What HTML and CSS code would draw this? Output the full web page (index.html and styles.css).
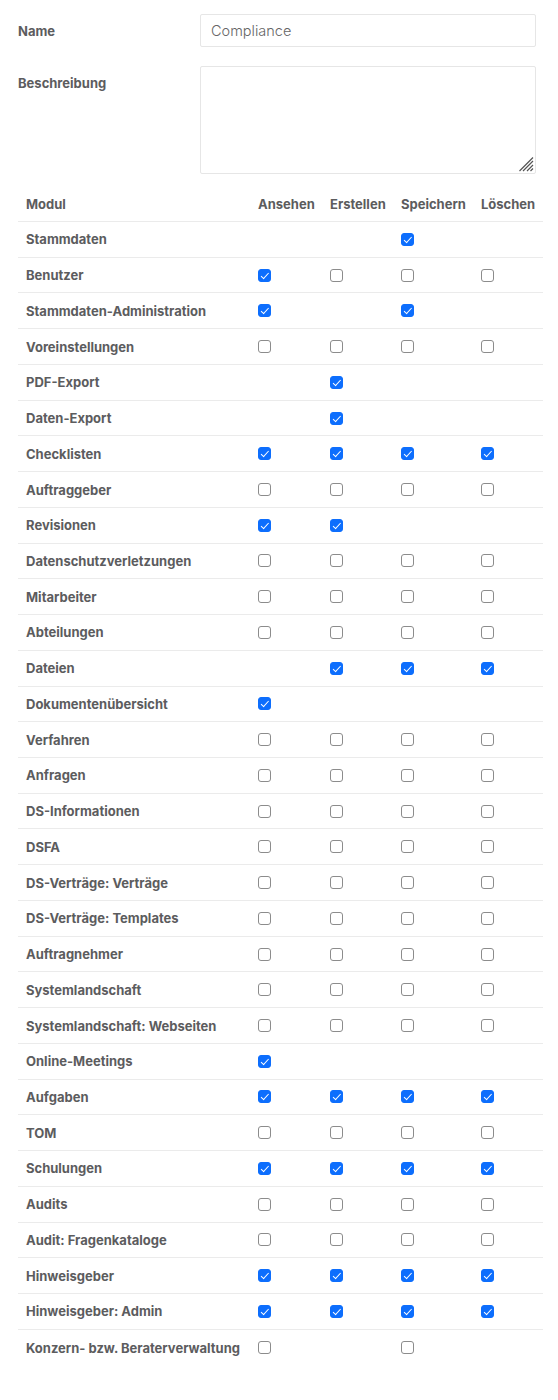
FILE: index.html
```html
<!DOCTYPE html>
<html lang="de">
<head>
<meta charset="utf-8">
<title>Rolle bearbeiten</title>
<link rel="stylesheet" href="styles.css">
</head>
<body>
<div class="page">
  <div class="form-row">
    <label class="form-label" for="name">Name</label>
    <input class="form-input" id="name" type="text" value="Compliance">
  </div>
  <div class="form-row top">
    <label class="form-label" for="desc">Beschreibung</label>
    <div class="textarea" id="desc">
      <svg class="grip" viewBox="0 0 16 16" width="16" height="16"><path d="M15 5L5 15M15 9L9 15M15 12.5L12.5 15M15 1.5L1.5 15" stroke="#555" stroke-width="1.2" fill="none"/></svg>
    </div>
  </div>

  <div class="perm-table">
    <div class="prow head"><div>Modul</div><div>Ansehen</div><div>Erstellen</div><div>Speichern</div><div>Löschen</div></div>
    <div class="prow"><div>Stammdaten</div><div></div><div></div><div><span class="cb on"></span></div><div></div></div>
    <div class="prow"><div>Benutzer</div><div><span class="cb on"></span></div><div><span class="cb"></span></div><div><span class="cb"></span></div><div><span class="cb"></span></div></div>
    <div class="prow"><div>Stammdaten-Administration</div><div><span class="cb on"></span></div><div></div><div><span class="cb on"></span></div><div></div></div>
    <div class="prow"><div>Voreinstellungen</div><div><span class="cb"></span></div><div><span class="cb"></span></div><div><span class="cb"></span></div><div><span class="cb"></span></div></div>
    <div class="prow"><div>PDF-Export</div><div></div><div><span class="cb on"></span></div><div></div><div></div></div>
    <div class="prow"><div>Daten-Export</div><div></div><div><span class="cb on"></span></div><div></div><div></div></div>
    <div class="prow"><div>Checklisten</div><div><span class="cb on"></span></div><div><span class="cb on"></span></div><div><span class="cb on"></span></div><div><span class="cb on"></span></div></div>
    <div class="prow"><div>Auftraggeber</div><div><span class="cb"></span></div><div><span class="cb"></span></div><div><span class="cb"></span></div><div><span class="cb"></span></div></div>
    <div class="prow"><div>Revisionen</div><div><span class="cb on"></span></div><div><span class="cb on"></span></div><div></div><div></div></div>
    <div class="prow"><div>Datenschutzverletzungen</div><div><span class="cb"></span></div><div><span class="cb"></span></div><div><span class="cb"></span></div><div><span class="cb"></span></div></div>
    <div class="prow"><div>Mitarbeiter</div><div><span class="cb"></span></div><div><span class="cb"></span></div><div><span class="cb"></span></div><div><span class="cb"></span></div></div>
    <div class="prow"><div>Abteilungen</div><div><span class="cb"></span></div><div><span class="cb"></span></div><div><span class="cb"></span></div><div><span class="cb"></span></div></div>
    <div class="prow"><div>Dateien</div><div></div><div><span class="cb on"></span></div><div><span class="cb on"></span></div><div><span class="cb on"></span></div></div>
    <div class="prow"><div>Dokumentenübersicht</div><div><span class="cb on"></span></div><div></div><div></div><div></div></div>
    <div class="prow"><div>Verfahren</div><div><span class="cb"></span></div><div><span class="cb"></span></div><div><span class="cb"></span></div><div><span class="cb"></span></div></div>
    <div class="prow"><div>Anfragen</div><div><span class="cb"></span></div><div><span class="cb"></span></div><div><span class="cb"></span></div><div><span class="cb"></span></div></div>
    <div class="prow"><div>DS-Informationen</div><div><span class="cb"></span></div><div><span class="cb"></span></div><div><span class="cb"></span></div><div><span class="cb"></span></div></div>
    <div class="prow"><div>DSFA</div><div><span class="cb"></span></div><div><span class="cb"></span></div><div><span class="cb"></span></div><div><span class="cb"></span></div></div>
    <div class="prow"><div>DS-Verträge: Verträge</div><div><span class="cb"></span></div><div><span class="cb"></span></div><div><span class="cb"></span></div><div><span class="cb"></span></div></div>
    <div class="prow"><div>DS-Verträge: Templates</div><div><span class="cb"></span></div><div><span class="cb"></span></div><div><span class="cb"></span></div><div><span class="cb"></span></div></div>
    <div class="prow"><div>Auftragnehmer</div><div><span class="cb"></span></div><div><span class="cb"></span></div><div><span class="cb"></span></div><div><span class="cb"></span></div></div>
    <div class="prow"><div>Systemlandschaft</div><div><span class="cb"></span></div><div><span class="cb"></span></div><div><span class="cb"></span></div><div><span class="cb"></span></div></div>
    <div class="prow"><div>Systemlandschaft: Webseiten</div><div><span class="cb"></span></div><div><span class="cb"></span></div><div><span class="cb"></span></div><div><span class="cb"></span></div></div>
    <div class="prow"><div>Online-Meetings</div><div><span class="cb on"></span></div><div></div><div></div><div></div></div>
    <div class="prow"><div>Aufgaben</div><div><span class="cb on"></span></div><div><span class="cb on"></span></div><div><span class="cb on"></span></div><div><span class="cb on"></span></div></div>
    <div class="prow"><div>TOM</div><div><span class="cb"></span></div><div><span class="cb"></span></div><div><span class="cb"></span></div><div><span class="cb"></span></div></div>
    <div class="prow"><div>Schulungen</div><div><span class="cb on"></span></div><div><span class="cb on"></span></div><div><span class="cb on"></span></div><div><span class="cb on"></span></div></div>
    <div class="prow"><div>Audits</div><div><span class="cb"></span></div><div><span class="cb"></span></div><div><span class="cb"></span></div><div><span class="cb"></span></div></div>
    <div class="prow"><div>Audit: Fragenkataloge</div><div><span class="cb"></span></div><div><span class="cb"></span></div><div><span class="cb"></span></div><div><span class="cb"></span></div></div>
    <div class="prow"><div>Hinweisgeber</div><div><span class="cb on"></span></div><div><span class="cb on"></span></div><div><span class="cb on"></span></div><div><span class="cb on"></span></div></div>
    <div class="prow"><div>Hinweisgeber: Admin</div><div><span class="cb on"></span></div><div><span class="cb on"></span></div><div><span class="cb on"></span></div><div><span class="cb on"></span></div></div>
    <div class="prow last"><div>Konzern- bzw. Beraterverwaltung</div><div><span class="cb"></span></div><div></div><div><span class="cb"></span></div><div></div></div>
  </div>
</div>
</body>
</html>
```

FILE: styles.css
```css
* { box-sizing: border-box; }
html, body { margin: 0; padding: 0; background: #fff; }
body {
  font-family: "Inter", "Noto Sans", sans-serif;
  color: #5c5c5e;
}
.page { padding: 14px 15px 0 18px; }
.form-row { display: flex; align-items: center; }
.form-row.top { align-items: flex-start; margin-top: 19px; }
.form-label {
  width: 182px;
  font-size: 13px;
  font-weight: 700;
  color: #5c5c5e;
}
.form-row.top .form-label { padding-top: 9px; }
.form-input {
  width: 336px;
  height: 33px;
  border: 1px solid #e6e6e6;
  border-radius: 2px;
  padding: 0 10px;
  font-family: "Inter", sans-serif;
  font-size: 14.5px;
  font-weight: 300;
  color: #666;
  outline: none;
}
.textarea {
  position: relative;
  width: 336px;
  height: 108px;
  border: 1px solid #e6e6e6;
  border-radius: 2px;
}
.grip { position: absolute; right: 1px; bottom: 1px; }

.perm-table { margin-top: 12px; width: 525px; }
.prow {
  display: grid;
  grid-template-columns: 232px 72px 71px 80px 70px;
  align-items: center;
  height: 35.74px;
  border-bottom: 1px solid #ebebeb;
  font-size: 13px;
  font-weight: 700;
}
.prow.last { border-bottom: none; }
.prow.head { height: 36px; }
.prow > div { padding-left: 8px; white-space: nowrap; }
.cb {
  display: block;
  width: 13px;
  height: 13px;
  border: 1px solid #8c8c8c;
  border-radius: 3px;
  background: #fff;
}
.cb.on {
  border-color: #0d6efd;
  background-color: #0d6efd;
  position: relative;
}
.cb.on::after {
  content: "";
  position: absolute;
  left: 3.5px;
  top: 1px;
  width: 3px;
  height: 6.5px;
  border: solid #fff;
  border-width: 0 1.6px 1.6px 0;
  transform: rotate(42deg);
}
```
